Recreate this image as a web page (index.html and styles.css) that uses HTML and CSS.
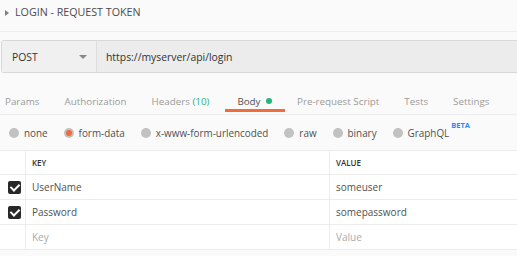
FILE: index.html
```html
<!doctype html>
<html lang="en">
  <head>
    <meta charset="UTF-8" />
    <title>Login - Request Token</title>
    <link rel="stylesheet" href="styles.css">
  </head>
  <body>
    <div class="request-title">
      <span class="title-caret"></span>
      <span>LOGIN - REQUEST TOKEN</span>
    </div>

    <div class="url-bar">
      <div class="method">
        <span>POST</span>
        <span class="method-caret"></span>
      </div>
      <div class="url">https://myserver/api/login</div>
    </div>

    <div class="tabs">
      <span class="tab tab-params">Params</span>
      <span class="tab">Authorization</span>
      <span class="tab">Headers <span class="count">(10)</span></span>
      <span class="tab tab-body active">Body <span class="dot"></span></span>
      <span class="tab">Pre-request Script</span>
      <span class="tab">Tests</span>
      <span class="tab">Settings</span>
    </div>

    <div class="body-types">
      <label class="radio"><span class="circle"></span>none</label>
      <label class="radio checked"><span class="circle"></span>form-data</label>
      <label class="radio"><span class="circle"></span>x-www-form-urlencoded</label>
      <label class="radio"><span class="circle"></span>raw</label>
      <label class="radio"><span class="circle"></span>binary</label>
      <label class="radio"><span class="circle"></span>GraphQL<sup class="beta">BETA</sup></label>
    </div>

    <div class="params-table">
      <div class="row head">
        <div class="cell check"></div>
        <div class="cell key">KEY</div>
        <div class="cell value">VALUE</div>
      </div>
      <div class="row">
        <div class="cell check"><span class="checkbox"></span></div>
        <div class="cell key">UserName</div>
        <div class="cell value">someuser</div>
      </div>
      <div class="row">
        <div class="cell check"><span class="checkbox"></span></div>
        <div class="cell key">Password</div>
        <div class="cell value">somepassword</div>
      </div>
      <div class="row placeholder">
        <div class="cell check"></div>
        <div class="cell key">Key</div>
        <div class="cell value">Value</div>
      </div>
    </div>
  </body>
</html>
```

FILE: styles.css
```css
* {
  margin: 0;
  padding: 0;
  box-sizing: border-box;
}

body {
  font-family: 'Open Sans', 'Liberation Sans', sans-serif;
  background: #fafafa;
  color: #505050;
  font-size: 10px;
  width: 517px;
  overflow: hidden;
}

.request-title {
  height: 32px;
  display: flex;
  align-items: center;
  padding-left: 5px;
  padding-bottom: 7px;
  font-size: 10.7px;
  color: #4a4a4a;
  border-bottom: 1px solid #ededed;
}

.title-caret {
  width: 0;
  height: 0;
  border-top: 3px solid transparent;
  border-bottom: 3px solid transparent;
  border-left: 4px solid #808080;
  margin-right: 6px;
  margin-top: 2px;
}

.url-bar {
  display: flex;
  height: 33px;
  margin-top: 8px;
  margin-left: 1px;
  border: 1px solid #d8d8d8;
  border-right: none;
  border-radius: 3px 0 0 3px;
  background: #ececec;
  font-size: 10.4px;
}

.method {
  width: 95px;
  display: flex;
  align-items: center;
  justify-content: space-between;
  padding: 0 9px 0 10px;
  background: #f0f0f0;
  border-right: 1px solid #dedede;
  color: #333;
}

.method-caret {
  width: 0;
  height: 0;
  border-left: 4px solid transparent;
  border-right: 4px solid transparent;
  border-top: 4px solid #888;
}

.url {
  display: flex;
  align-items: center;
  padding-left: 9px;
  color: #333;
}

.tabs {
  height: 42px;
  display: flex;
  align-items: flex-end;
  border-bottom: 1px solid #ececec;
  font-size: 9.8px;
  color: #9a9a9a;
}

.tab {
  height: 100%;
  display: flex;
  align-items: center;
  padding-top: 15px;
  margin-left: 25px;
  white-space: pre;
}

.tab-params { margin-left: 5px; }
.tab-body { margin-left: 28px; }

.count {
  color: #26b47f;
}

.tab.active {
  color: #505050;
  position: relative;
}

.tab.active::after {
  content: '';
  position: absolute;
  left: -12px;
  right: -13px;
  bottom: 2px;
  height: 3px;
  background: #f26b3a;
}

.dot {
  display: inline-block;
  width: 6px;
  height: 6px;
  border-radius: 50%;
  background: #26b47f;
  margin-left: 3px;
}

.body-types {
  height: 35px;
  display: flex;
  align-items: center;
  padding-left: 9px;
  font-size: 9.9px;
  color: #505050;
}

.radio {
  display: flex;
  align-items: center;
  margin-right: 16px;
}

.circle {
  width: 10px;
  height: 10px;
  border-radius: 50%;
  background: #c2c2c2;
  margin-right: 5px;
  position: relative;
}

.radio.checked .circle::after {
  content: '';
  position: absolute;
  left: 2px;
  top: 2px;
  width: 6px;
  height: 6px;
  border-radius: 50%;
  background: #f26b3a;
}

.beta {
  font-size: 7.5px;
  font-weight: 700;
  color: #2f8cf0;
  margin-left: 2px;
  align-self: flex-start;
  margin-top: -6px;
}

.params-table {
  background: #fff;
  border-top: 1px solid #ececec;
}

.row {
  display: flex;
  height: 25px;
  border-bottom: 1px solid #ececec;
  font-size: 10px;
  color: #505050;
}

.row.head {
  height: 24px;
  font-size: 8px;
  font-weight: 600;
  color: #333;
}

.row.placeholder {
  color: #aaa;
}

.cell {
  display: flex;
  align-items: center;
}

.cell.check {
  width: 26px;
  justify-content: center;
  padding-left: 3px;
  border-right: 1px solid #ececec;
}

.cell.key {
  width: 304px;
  padding-left: 6px;
  border-right: 1px solid #ececec;
}

.cell.value {
  flex: 1;
  padding-left: 6px;
}

.checkbox {
  width: 13px;
  height: 13px;
  border-radius: 2px;
  background: #282828;
  position: relative;
}

.checkbox::after {
  content: '';
  position: absolute;
  left: 4px;
  top: 1px;
  width: 4px;
  height: 7px;
  border: solid #fff;
  border-width: 0 2px 2px 0;
  transform: rotate(45deg);
}
```
